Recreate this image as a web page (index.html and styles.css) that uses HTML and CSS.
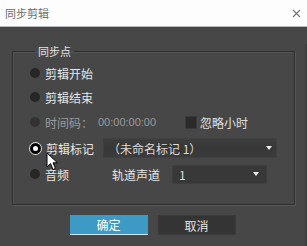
FILE: index.html
```html
<!DOCTYPE html>
<html lang="zh">
<head>
    <meta charset="UTF-8">
    <title>同步剪辑</title>
    <link rel="stylesheet" href="styles.css">
</head>
<body>

<div class="dialog">
    <div class="titlebar">
        <span class="title">同步剪辑</span>
        <svg class="close" width="9" height="9" viewBox="0 0 9 9">
            <path d="M1 1 L8 8 M8 1 L1 8" stroke="#777" stroke-width="1.2"/>
        </svg>
    </div>

    <div class="content">
        <fieldset class="sync-group">
            <legend>同步点</legend>

            <div class="row">
                <div class="choice"><span class="radio"></span><span>剪辑开始</span></div>
            </div>
            <div class="row">
                <div class="choice"><span class="radio"></span><span>剪辑结束</span></div>
            </div>
            <div class="row row-tall">
                <div class="choice disabled"><span class="radio"></span><span>时间码：</span></div>
                <span class="timecode">00:00:00:00</span>
                <span class="checkbox"></span>
                <span class="check-label">忽略小时</span>
            </div>
            <div class="row row-tall">
                <div class="choice"><span class="radio checked"></span><span>剪辑标记</span></div>
                <div class="combo combo-marker">
                    <span>（未命名标记 1）</span>
                    <span class="arrow"></span>
                </div>
            </div>
            <div class="row row-tall">
                <div class="choice"><span class="radio"></span><span>音频</span></div>
                <span class="track-label">轨道声道</span>
                <div class="combo combo-track">
                    <span>1</span>
                    <span class="arrow"></span>
                </div>
            </div>
        </fieldset>

        <div class="buttons">
            <button class="btn btn-ok">确定</button>
            <button class="btn btn-cancel">取消</button>
        </div>
    </div>

    <!-- курсор мыши поверх диалога -->
    <svg class="cursor" width="13" height="19" viewBox="0 0 13 19">
        <path d="M1 1 L1 15 L4.5 11.5 L7 17.5 L9.5 16.5 L7 10.8 L11.5 10.8 Z" fill="#fff" stroke="#000" stroke-width="1"/>
    </svg>
</div>

</body>
</html>
```

FILE: styles.css
```css
/* Основные стили */
body {
    margin: 0;
    padding: 0;
    font-family: "Noto Sans CJK SC", "Noto Sans", sans-serif;
    background-color: #474747;
}

.dialog {
    position: relative;
    width: 307px;
    height: 246px;
    background-color: #474747;
    overflow: hidden;
}

.titlebar {
    height: 26px;
    background-color: #fdfdfd;
    border-bottom: 1px solid #b8b8b8;
    display: flex;
    align-items: center;
    justify-content: space-between;
    padding: 0 6px 0 5px;
}

.title {
    font-size: 11px;
    color: #6a6a6a;
}

.close {
    display: block;
}

.content {
    height: 219px;
    border-right: 2px solid #3f3f3f;
    box-sizing: border-box;
}

.sync-group {
    margin: 17px 10px 0 12px;
    padding: 3px 0 17px 17px;
    border: 1px solid #2f2f2f;
    box-shadow: 1px 1px 0 #575757, inset 1px 1px 0 #525252;
}

.sync-group legend {
    margin-left: 5px;
    padding: 0 3px;
    font-size: 11px;
    line-height: 14px;
    color: #e4e4e4;
}

.row {
    display: flex;
    align-items: center;
    height: 24px;
    font-size: 12px;
    color: #e6e6e6;
}

.row-tall {
    height: 26px;
}

.choice {
    display: flex;
    align-items: center;
    gap: 5px;
    width: 68px;
    white-space: nowrap;
}

.choice.disabled {
    color: #9a9a9a;
}

.radio {
    width: 10px;
    height: 10px;
    border-radius: 50%;
    background-color: #262626;
    flex-shrink: 0;
}

.choice.disabled .radio {
    background-color: #333;
}

.radio.checked {
    width: 11px;
    height: 11px;
    background-color: #fff;
    box-shadow: 0 0 0 1px #ddd;
    border: 3px solid #000;
    box-sizing: border-box;
}

.timecode {
    width: 87px;
    font-family: "Liberation Sans", sans-serif;
    font-size: 11px;
    color: #9a9a9a;
}

.checkbox {
    width: 12px;
    height: 13px;
    background-color: #2a2a2a;
    border: 1px solid #3a3a3a;
    box-sizing: border-box;
    margin-right: 3px;
}

.check-label {
    color: #e0e0e0;
}

.combo {
    display: flex;
    align-items: center;
    justify-content: space-between;
    box-sizing: border-box;
    color: #dcdcdc;
    font-size: 12px;
}

.combo-marker {
    margin-left: 5px;
    width: 174px;
    height: 20px;
    padding: 0 4px 0 4px;
    background: linear-gradient(#3d3d3d, #373737 50%, #3b3b3b);
    border: 1px solid #404040;
}

.combo-track {
    width: 95px;
    height: 19px;
    padding: 0 7px 0 6px;
    background-color: #383838;
    border: 1px solid #3e3e3e;
}

.track-label {
    margin-left: 14px;
    width: 60px;
}

.arrow {
    width: 0;
    height: 0;
    border-left: 3.5px solid transparent;
    border-right: 3.5px solid transparent;
    border-top: 4px solid #eeeeee;
}

.buttons {
    display: flex;
    justify-content: center;
    gap: 10px;
    margin-top: 10px;
}

.btn {
    width: 78px;
    height: 20px;
    padding: 0;
    border: none;
    font-family: "Noto Sans CJK SC", "Noto Sans", sans-serif;
    font-size: 12px;
    line-height: 19px;
    box-sizing: border-box;
}

.btn-ok {
    background-color: #3d9ac4;
    color: #fff;
    border-bottom: 1px solid #d5e8f0;
}

.btn-cancel {
    background-color: #343434;
    color: #e6e6e6;
    border: 1px solid #3a3a3a;
}

.cursor {
    position: absolute;
    left: 46px;
    top: 152px;
}
```
